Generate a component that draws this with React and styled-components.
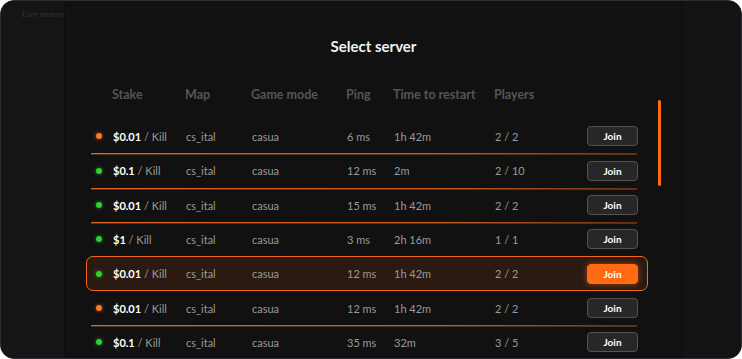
import React from "react";
import styled, { createGlobalStyle, css } from "styled-components";

const Global = createGlobalStyle`
  html, body { margin: 0; padding: 0; background: #ffffff; }
  body { font-family: Lato, "Open Sans", sans-serif; }
  * { box-sizing: border-box; }
`;

const Frame = styled.div`
  width: 742px;
  height: 359px;
  border: 1.5px solid #2e2e33;
  border-radius: 14px;
  overflow: hidden;
  background: #121212;
  display: flex;
`;

const Sidebar = styled.aside`
  width: 64px;
  flex: none;
  background: #151515;
  border-right: 1px solid #0d0d0d;
  padding: 8px 0 0 21px;
  position: relative;
  z-index: 1;
`;

const SideLabel = styled.div`
  font-size: 8px;
  color: #333333;
  white-space: nowrap;
`;

const Main = styled.main`
  flex: 1;
  position: relative;
  background: #111111;
  padding: 35px 0 0 21px;
`;

const Title = styled.h1`
  margin: 0 0 0 -21px;
  text-align: center;
  font-size: 15px;
  font-weight: 700;
  color: #f2f2f2;
  line-height: 20px;
`;

const Columns = css`
  display: grid;
  grid-template-columns: 17px 73px 66px 95px 47px 101px 92px 51px;
  align-items: center;
  padding-left: 9px;
`;

const HeaderRow = styled.div`
  ${Columns};
  margin-top: 28px;
  height: 20px;
  width: 562px;
`;

const HeadCell = styled.div`
  font-size: 12.5px;
  font-weight: 700;
  color: #555555;
  white-space: nowrap;
`;

const Body = styled.div`
  margin-top: 15px;
  width: 562px;
`;

const Row = styled.div`
  ${Columns};
  position: relative;
  height: ${(p) => p.$h}px;
  border-radius: 7px;
  border: 1.5px solid transparent;
  ${(p) =>
    p.$active &&
    css`
      border-color: #f06a1c;
      background: #2a1a12;
    `}
  &::after {
    content: "";
    display: ${(p) => (p.$line ? "block" : "none")};
    position: absolute;
    left: 4px;
    right: 10px;
    bottom: -1.5px;
    height: 1px;
    background: linear-gradient(90deg, #e0621c 0%, #cc5a1a 65%, #6a3012 100%);
    box-shadow: 0 1px 0 rgba(190, 85, 26, 0.45);
  }
`;

const Dot = styled.span`
  width: 6px;
  height: 6px;
  border-radius: 50%;
  background: ${(p) => (p.$status === "busy" ? "#ff7a1a" : "#2fd12f")};
  box-shadow: 0 0 4px
    ${(p) => (p.$status === "busy" ? "rgba(255,122,26,0.6)" : "rgba(47,209,47,0.6)")};
`;

const Stake = styled.div`
  font-size: 11px;
  color: #9a9a9a;
  white-space: nowrap;
  b {
    color: #ffffff;
    font-weight: 700;
  }
`;

const Cell = styled.div`
  font-size: 11px;
  color: #9a9a9a;
  white-space: nowrap;
`;

const JoinButton = styled.button`
  width: 51px;
  height: 20px;
  border-radius: 4px;
  font-family: inherit;
  font-size: 10px;
  font-weight: 700;
  color: #ffffff;
  padding: 0;
  cursor: pointer;
  ${(p) =>
    p.$primary
      ? css`
          background: #ff6a12;
          border: 1px solid #ff6a12;
          box-shadow: 0 0 6px rgba(255, 106, 18, 0.55);
        `
      : css`
          background: #272727;
          border: 1px solid #535353;
        `}
`;

const Scrollbar = styled.div`
  position: absolute;
  left: 593px;
  top: 99px;
  width: 3px;
  height: 86px;
  border-radius: 2px;
  background: #ff6a12;
`;

const RightPanel = styled.aside`
  width: 59px;
  flex: none;
  background: #131313;
  border-left: 1px solid #0e0e0e;
`;

const rows = [
  { s: "busy", stake: "$0.01", ping: "6 ms", time: "1h 42m", players: "2 / 2", h: 34 },
  { s: "ok", stake: "$0.1", ping: "12 ms", time: "2m", players: "2 / 10", h: 35 },
  { s: "ok", stake: "$0.01", ping: "15 ms", time: "1h 42m", players: "2 / 2", h: 34 },
  { s: "ok", stake: "$1", ping: "3 ms", time: "2h 16m", players: "1 / 1", h: 34 },
  { s: "ok", stake: "$0.01", ping: "12 ms", time: "1h 42m", players: "2 / 2", h: 35, active: true },
  { s: "busy", stake: "$0.01", ping: "12 ms", time: "1h 42m", players: "2 / 2", h: 34 },
  { s: "ok", stake: "$0.1", ping: "35 ms", time: "32m", players: "3 / 5", h: 34 },
];

export default function App() {
  return (
    <>
      <Global />
      <Frame>
        <Sidebar>
          <SideLabel>Earn money</SideLabel>
        </Sidebar>
        <Main>
          <Title>Select server</Title>
          <HeaderRow>
            <span />
            <HeadCell>Stake</HeadCell>
            <HeadCell>Map</HeadCell>
            <HeadCell>Game mode</HeadCell>
            <HeadCell>Ping</HeadCell>
            <HeadCell>Time to restart</HeadCell>
            <HeadCell>Players</HeadCell>
            <span />
          </HeaderRow>
          <Body>
            {rows.map((r, i) => {
              const next = rows[i + 1];
              const line = !r.active && !(next && next.active) && i < rows.length - 1;
              return (
                <Row key={i} $active={r.active} $line={line} $h={r.h}>
                  <Dot $status={r.s} />
                  <Stake>
                    <b>{r.stake}</b> / Kill
                  </Stake>
                  <Cell>cs_ital</Cell>
                  <Cell>casua</Cell>
                  <Cell>{r.ping}</Cell>
                  <Cell>{r.time}</Cell>
                  <Cell>{r.players}</Cell>
                  <JoinButton $primary={r.active}>Join</JoinButton>
                </Row>
              );
            })}
          </Body>
          <Scrollbar />
        </Main>
        <RightPanel />
      </Frame>
    </>
  );
}
